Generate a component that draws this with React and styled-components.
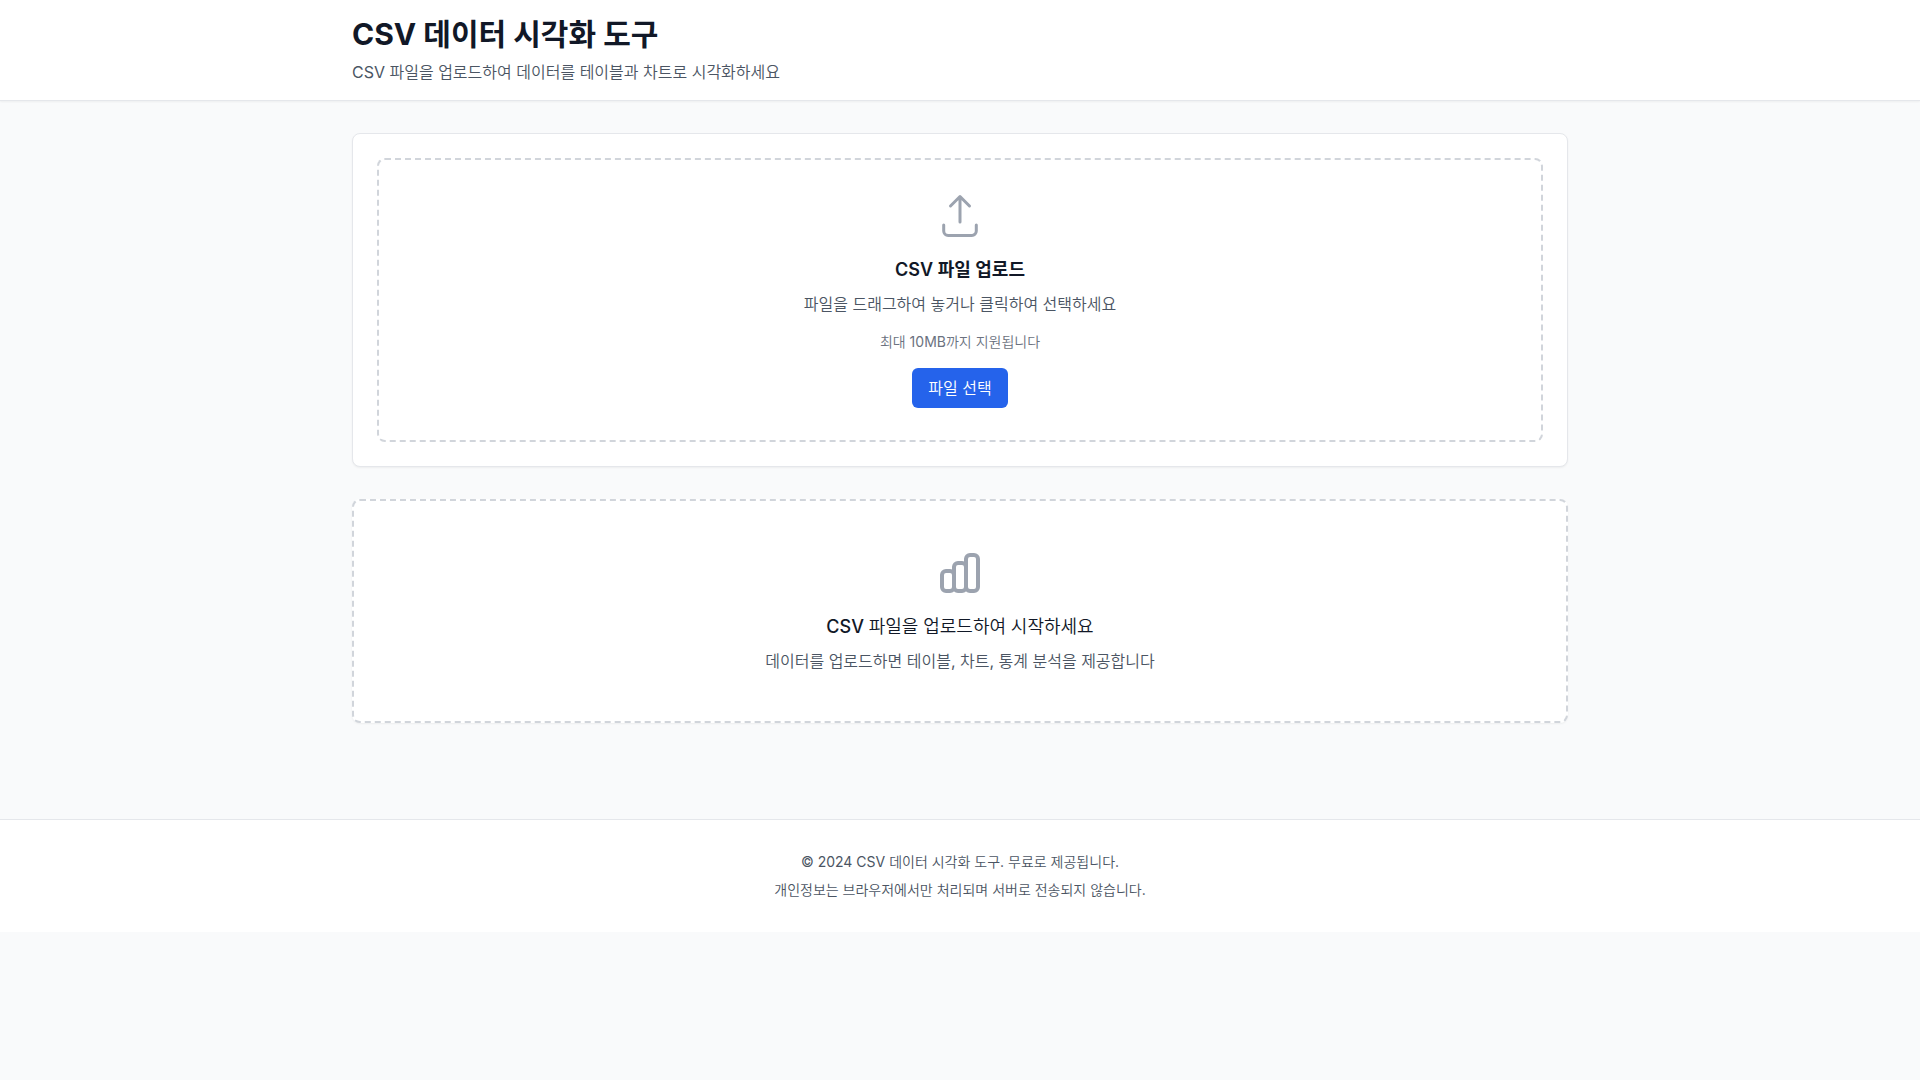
import React, { useRef, useState } from "react";
import styled, { createGlobalStyle } from "styled-components";

const GlobalStyle = createGlobalStyle`
  *, *::before, *::after { box-sizing: border-box; }
  body {
    margin: 0;
    background: #f9fafb;
    color: #111827;
    font-family: Inter, "Noto Sans CJK KR DemiLight", "Noto Sans CJK KR", sans-serif;
    font-size: 16px;
    line-height: 24px;
  }
  h1, h2, h3, p { margin: 0; }
`;

const Header = styled.header`
  background: #fff;
  border-bottom: 1px solid #e5e7eb;
  box-shadow: 0 1px 2px rgba(0, 0, 0, 0.05);
`;

const Container = styled.div`
  max-width: 1280px;
  margin: 0 auto;
  padding: ${(p) => p.$space}px 32px;
`;

const Title = styled.h1`
  font-family: Inter, "Noto Sans CJK KR", sans-serif;
  font-size: 30px;
  line-height: 36px;
  font-weight: 700;
`;

const Text = styled.p`
  margin-top: 8px;
  color: #4b5563;
`;

const Sections = styled.main`
  display: flex;
  flex-direction: column;
  gap: 32px;
`;

const Card = styled.section`
  padding: 24px;
  background: #fff;
  border: 1px solid #e5e7eb;
  border-radius: 8px;
  box-shadow: 0 1px 2px rgba(0, 0, 0, 0.05);
`;

const DashedPanel = styled.div`
  display: flex;
  flex-direction: column;
  align-items: center;
  padding: ${(p) => p.$space}px;
  text-align: center;
  background: #fff;
  border: 2px dashed #d1d5db;
  border-radius: 8px;
  box-shadow: ${(p) => (p.$raised ? "0 1px 2px rgba(0, 0, 0, 0.05)" : "none")};
`;

const Icon = styled.svg`
  width: 48px;
  height: 48px;
  margin-bottom: 16px;
  fill: none;
  stroke: #9ca3af;
  stroke-linecap: round;
  stroke-linejoin: round;
`;

const Heading = styled.h2`
  font-size: 18px;
  line-height: 28px;
  font-weight: 500;
`;

const StrongHeading = styled(Heading)`
  font-family: Inter, "Noto Sans CJK KR", sans-serif;
  font-weight: 600;
`;

const Hint = styled.p`
  margin: 16px 0;
  color: #6b7280;
  font-size: 14px;
  line-height: 20px;
`;

const Button = styled.button`
  padding: 8px 16px;
  color: #fff;
  background: #2563eb;
  border: 0;
  border-radius: 6px;
  font: inherit;
  cursor: pointer;
  &:hover { background: #1d4ed8; }
`;

const Footer = styled.footer`
  margin-top: 64px;
  background: #fff;
  border-top: 1px solid #e5e7eb;
  color: #4b5563;
  font-size: 14px;
  line-height: 20px;
  text-align: center;
`;

export default function App() {
  const picker = useRef(null);
  const [, setFile] = useState(null);

  const handleDrop = (event) => {
    event.preventDefault();
    setFile(event.dataTransfer.files[0] ?? null);
  };

  return (
    <>
      <GlobalStyle />
      <Header>
        <Container $space={16}>
          <Title>CSV 데이터 시각화 도구</Title>
          <Text>CSV 파일을 업로드하여 데이터를 테이블과 차트로 시각화하세요</Text>
        </Container>
      </Header>
      <Container $space={32}>
        <Sections>
          <Card>
            <DashedPanel
              $space={32}
              onDragOver={(event) => event.preventDefault()}
              onDrop={handleDrop}
            >
              <Icon viewBox="0 0 48 48" strokeWidth="3" aria-hidden="true">
                <path d="M7.7 33v6a4.5 4.5 0 0 0 4.5 4.5h23.6a4.5 4.5 0 0 0 4.5-4.5v-6M24 30V4.5M14.5 14 24 4.5 33.5 14" />
              </Icon>
              <StrongHeading>CSV 파일 업로드</StrongHeading>
              <Text>파일을 드래그하여 놓거나 클릭하여 선택하세요</Text>
              <Hint>최대 10MB까지 지원됩니다</Hint>
              <input
                ref={picker}
                type="file"
                accept=".csv"
                aria-label="파일 선택"
                hidden
                onChange={(event) => setFile(event.target.files[0] ?? null)}
              />
              <Button type="button" onClick={() => picker.current.click()}>
                파일 선택
              </Button>
            </DashedPanel>
          </Card>
          <DashedPanel $space={48} $raised>
            <Icon viewBox="0 0 24 24" strokeWidth="2" aria-hidden="true">
              <path d="M9 19v-6a2 2 0 00-2-2H5a2 2 0 00-2 2v6a2 2 0 002 2h2a2 2 0 002-2zm0 0V9a2 2 0 012-2h2a2 2 0 012 2v10m-6 0a2 2 0 002 2h2a2 2 0 002-2m0 0V5a2 2 0 012-2h2a2 2 0 012 2v14a2 2 0 01-2 2h-2a2 2 0 01-2-2z" />
            </Icon>
            <Heading>CSV 파일을 업로드하여 시작하세요</Heading>
            <Text>데이터를 업로드하면 테이블, 차트, 통계 분석을 제공합니다</Text>
          </DashedPanel>
        </Sections>
      </Container>
      <Footer>
        <Container $space={32}>
          <p>© 2024 CSV 데이터 시각화 도구. 무료로 제공됩니다.</p>
          <Text>개인정보는 브라우저에서만 처리되며 서버로 전송되지 않습니다.</Text>
        </Container>
      </Footer>
    </>
  );
}
